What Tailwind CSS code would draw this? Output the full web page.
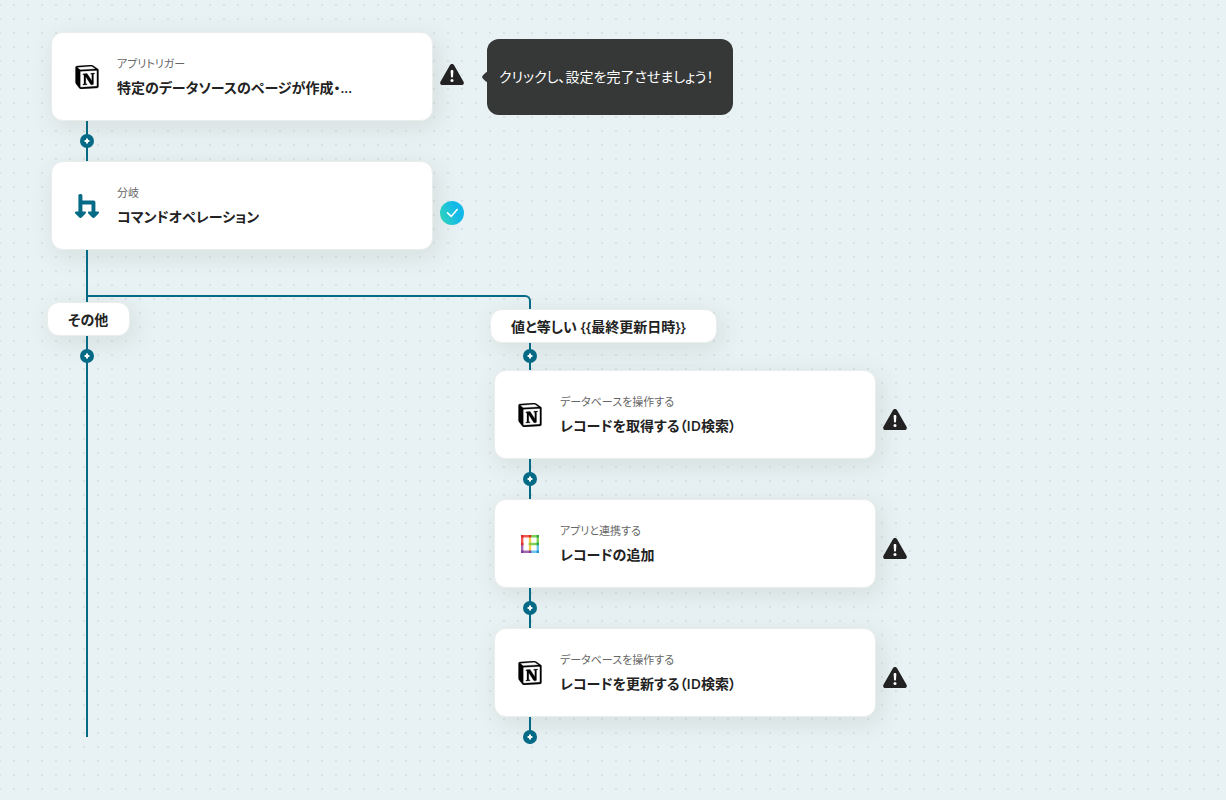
<!DOCTYPE html>
<html lang="ja">
<head>
    <meta charset="UTF-8">
    <meta name="viewport" content="width=device-width, initial-scale=1.0">
    <title>フロー</title>
    <script src="https://cdn.jsdelivr.net/npm/@tailwindcss/browser@4"></script>
</head>
<body class="min-h-screen bg-[#e8f1f3] font-['Open_Sans','Noto_Sans_CJK_JP',sans-serif] text-[#222] [font-feature-settings:'palt']">
    <!-- shared icons -->
    <svg class="hidden" aria-hidden="true">
        <symbol id="notion" viewBox="0 0 24 24">
            <path fill="#000" stroke="#000" stroke-width="0.25" d="M4.459 4.208c.746.606 1.026.56 2.428.466l13.215-.793c.28 0 .047-.28-.046-.326L17.86 1.968c-.42-.326-.981-.7-2.055-.607L3.01 2.295c-.466.046-.56.28-.374.466zm.793 3.08v13.904c0 .747.373 1.027 1.214.98l14.523-.84c.841-.046.935-.56.935-1.167V6.354c0-.606-.233-.933-.748-.887l-15.177.887c-.56.047-.747.327-.747.933zm14.337.745c.093.42 0 .84-.42.888l-.7.14v10.264c-.608.327-1.168.514-1.635.514-.748 0-.935-.234-1.495-.933l-4.577-7.186v6.952L12.21 19s0 .84-1.168.84l-3.222.186c-.093-.186 0-.653.327-.746l.84-.233V9.854L7.822 9.76c-.094-.42.14-1.026.793-1.073l3.456-.233 4.764 7.279v-6.44l-1.215-.139c-.093-.514.28-.887.747-.933zM1.936 1.035l13.31-.98c1.634-.14 2.055-.047 3.082.7l4.249 2.986c.7.513.934.653.934 1.213v16.378c0 1.026-.373 1.634-1.68 1.726l-15.458.934c-.98.047-1.448-.093-1.962-.747l-3.129-4.06c-.56-.747-.793-1.306-.793-1.96V2.667c0-.839.374-1.54 1.447-1.632z"/>
        </symbol>
        <symbol id="warning" viewBox="0 0 24 24">
            <path fill="#222" d="M9.9 2.2c.9-1.6 3.3-1.6 4.2 0l9.3 16.2c1.1 1.9.2 3.6-2 3.6H2.6c-2.2 0-3.1-1.7-2-3.6z"/>
            <path fill="#fff" d="M10.6 8c0-1.5 2.8-1.5 2.8 0l-.4 5.8c-.1 1.1-1.9 1.1-2 0z"/>
            <circle cx="12" cy="17.4" r="1.5" fill="#fff"/>
        </symbol>
        <symbol id="plus" viewBox="0 0 14 14">
            <circle cx="7" cy="7" r="7" fill="#056a85"/>
            <path stroke="#fff" stroke-width="2" d="M7 4.6v4.8M4.6 7h4.8"/>
        </symbol>
    </svg>

    <main class="min-h-screen overflow-hidden bg-[radial-gradient(circle,#d9e2e3_1px,transparent_1px)] bg-[size:14px_14px] bg-[position:7px_12px] pt-8 pl-[51px] pb-14">
        <!-- trunk -->
        <div class="flex items-start gap-[7px]">
            <div class="flex h-[89px] w-[382px] shrink-0 items-center gap-[18px] rounded-xl border border-[#e9eeec] bg-white px-[23px] shadow-[4px_6px_24px_rgba(80,100,70,0.12)]">
                <svg class="size-6 shrink-0"><use href="#notion"/></svg>
                <div class="min-w-0 pt-0.5">
                    <p class="text-[11px] leading-4 text-[#666]">アプリトリガー</p>
                    <p class="mt-1 truncate text-sm leading-6 font-semibold">特定のデータソースのページが作成・...</p>
                </div>
            </div>
            <svg class="mt-[31px] size-6 shrink-0" role="img" aria-label="未設定"><use href="#warning"/></svg>
            <div role="tooltip" class="relative mt-[7px] ml-4 flex h-[76px] min-w-[246px] items-center rounded-xl bg-[#363837] px-3 text-sm text-white before:absolute before:top-[34px] before:-left-1 before:size-2 before:rotate-45 before:rounded-xs before:bg-[#363837]">クリックし、設定を完了させましょう！</div>
        </div>
        <div class="ml-[35px] flex h-10 w-0.5 items-center justify-center bg-[#056a85]">
            <button type="button" aria-label="追加" class="size-3.5 shrink-0"><svg class="size-3.5"><use href="#plus"/></svg></button>
        </div>
        <div class="flex items-start gap-[7px]">
            <div class="flex h-[89px] w-[382px] shrink-0 items-center gap-[18px] rounded-xl border border-[#e9eeec] bg-white px-[23px] shadow-[4px_6px_24px_rgba(80,100,70,0.12)]">
                <svg class="size-6 shrink-0" viewBox="0 0 24 24" fill="#056a85">
                    <path d="M3.4 1.6c0-2 4-2 4 0v4.8h11c1.3 0 2 .8 2 2v9.2h2.4c1.1 0 1.5 1 .8 1.8l-4 4.1c-.7.7-1.6.7-2.3 0l-4-4.1c-.7-.8-.3-1.8.8-1.8h2.4v-7H7.4v7h2.4c1.1 0 1.5 1 .8 1.8l-4 4.1c-.7.7-1.6.7-2.3 0l-4-4.1c-.7-.8-.3-1.8.8-1.8h2.3z"/>
                </svg>
                <div class="min-w-0 pt-0.5">
                    <p class="text-[11px] leading-4 text-[#666]">分岐</p>
                    <p class="mt-1 truncate text-sm leading-6 font-semibold">コマンドオペレーション</p>
                </div>
            </div>
            <svg class="mt-10 size-6 shrink-0" viewBox="0 0 24 24" role="img" aria-label="設定済み">
                <defs>
                    <linearGradient id="done" x1="0" y1="0.7" x2="1" y2="0.3">
                        <stop offset="0" stop-color="#2fd3bd"/>
                        <stop offset="0.7" stop-color="#12b9e8"/>
                    </linearGradient>
                </defs>
                <circle cx="12" cy="12" r="12" fill="url(#done)"/>
                <path d="M7 11.4l4.2 4 6.4-7.4" fill="none" stroke="#fff" stroke-width="1.6"/>
            </svg>
        </div>

        <!-- branches -->
        <div class="flex">
            <div class="flex w-[443px] shrink-0 flex-col items-start">
                <div class="ml-[35px] h-[52px] w-0.5 bg-[#056a85]"></div>
                <div class="-ml-1 min-w-[83px] rounded-xl border border-[#e9eeec] bg-white px-5 pt-[5px] pb-[3px] text-sm leading-6 font-semibold shadow-[4px_6px_24px_rgba(80,100,70,0.12)]">その他</div>
                <div class="mb-[7px] ml-[35px] flex w-0.5 flex-1 justify-center bg-[#056a85] pt-[13px]">
                    <button type="button" aria-label="追加" class="size-3.5 shrink-0"><svg class="size-3.5"><use href="#plus"/></svg></button>
                </div>
            </div>
            <div class="relative mt-[59px] flex flex-col items-start">
                <!-- elbow from the trunk to this branch -->
                <div class="absolute -top-3.5 right-[calc(100%-37px)] h-3.5 w-[443px] rounded-tr-md border-t-2 border-r-2 border-[#056a85]"></div>
                <div class="-ml-1 min-w-[227px] rounded-xl border border-[#e9eeec] bg-white px-5 pt-[5px] pb-[3px] text-sm leading-6 font-semibold shadow-[4px_6px_24px_rgba(80,100,70,0.12)]">値と等しい {{最終更新日時}}</div>
                <div class="ml-[35px] flex h-[27px] w-0.5 items-start justify-center bg-[#056a85] pt-1.5">
                    <button type="button" aria-label="追加" class="size-3.5 shrink-0"><svg class="size-3.5"><use href="#plus"/></svg></button>
                </div>
                <div class="flex items-start gap-[7px]">
                    <div class="flex h-[89px] w-[382px] shrink-0 items-center gap-[18px] rounded-xl border border-[#e9eeec] bg-white px-[23px] shadow-[4px_6px_24px_rgba(80,100,70,0.12)]">
                        <svg class="size-6 shrink-0"><use href="#notion"/></svg>
                        <div class="min-w-0 pt-0.5">
                            <p class="text-[11px] leading-4 text-[#666]">データベースを操作する</p>
                            <p class="mt-1 truncate text-sm leading-6 font-semibold">レコードを取得する（ID検索）</p>
                        </div>
                    </div>
                    <svg class="mt-[38px] size-6 shrink-0" role="img" aria-label="未設定"><use href="#warning"/></svg>
                </div>
                <div class="ml-[35px] flex h-10 w-0.5 items-center justify-center bg-[#056a85]">
                    <button type="button" aria-label="追加" class="size-3.5 shrink-0"><svg class="size-3.5"><use href="#plus"/></svg></button>
                </div>
                <div class="flex items-start gap-[7px]">
                    <div class="flex h-[89px] w-[382px] shrink-0 items-center gap-[18px] rounded-xl border border-[#e9eeec] bg-white px-[23px] shadow-[4px_6px_24px_rgba(80,100,70,0.12)]">
                        <svg class="size-6 shrink-0" viewBox="0 0 24 24" fill="none" stroke-width="2.4">
                            <path stroke="#f2574e" d="M4.2 12V4.2H12"/>
                            <path stroke="#a469b0" d="M4.2 12v7.8H12"/>
                            <path stroke="#7fd05a" d="M12 4.2h7.8V12H12"/>
                            <path stroke="#6cc5f2" d="M19.8 12v7.8H12"/>
                            <path stroke="#f3cf52" d="M12 4.2v15.6"/>
                            <path stroke="#d92b2b" d="M3 4.2h2.4M3 12h2.4M10.8 4.2h2.4"/>
                            <path stroke="#2ba84a" d="M18.6 4.2H21M18.6 12H21"/>
                            <path stroke="#8cc63f" d="M10.8 12h2.4"/>
                            <path stroke="#7d3c98" d="M3 19.8h2.4M10.8 19.8h2.4"/>
                            <path stroke="#2490dd" d="M18.6 19.8H21"/>
                        </svg>
                        <div class="min-w-0 pt-0.5">
                            <p class="text-[11px] leading-4 text-[#666]">アプリと連携する</p>
                            <p class="mt-1 truncate text-sm leading-6 font-semibold">レコードの追加</p>
                        </div>
                    </div>
                    <svg class="mt-[38px] size-6 shrink-0" role="img" aria-label="未設定"><use href="#warning"/></svg>
                </div>
                <div class="ml-[35px] flex h-10 w-0.5 items-center justify-center bg-[#056a85]">
                    <button type="button" aria-label="追加" class="size-3.5 shrink-0"><svg class="size-3.5"><use href="#plus"/></svg></button>
                </div>
                <div class="flex items-start gap-[7px]">
                    <div class="flex h-[89px] w-[382px] shrink-0 items-center gap-[18px] rounded-xl border border-[#e9eeec] bg-white px-[23px] shadow-[4px_6px_24px_rgba(80,100,70,0.12)]">
                        <svg class="size-6 shrink-0"><use href="#notion"/></svg>
                        <div class="min-w-0 pt-0.5">
                            <p class="text-[11px] leading-4 text-[#666]">データベースを操作する</p>
                            <p class="mt-1 truncate text-sm leading-6 font-semibold">レコードを更新する（ID検索）</p>
                        </div>
                    </div>
                    <svg class="mt-[38px] size-6 shrink-0" role="img" aria-label="未設定"><use href="#warning"/></svg>
                </div>
                <div class="ml-[35px] flex h-[27px] w-0.5 items-end justify-center bg-[#056a85]">
                    <button type="button" aria-label="追加" class="size-3.5 shrink-0"><svg class="size-3.5"><use href="#plus"/></svg></button>
                </div>
            </div>
        </div>
    </main>
</body>
</html>
